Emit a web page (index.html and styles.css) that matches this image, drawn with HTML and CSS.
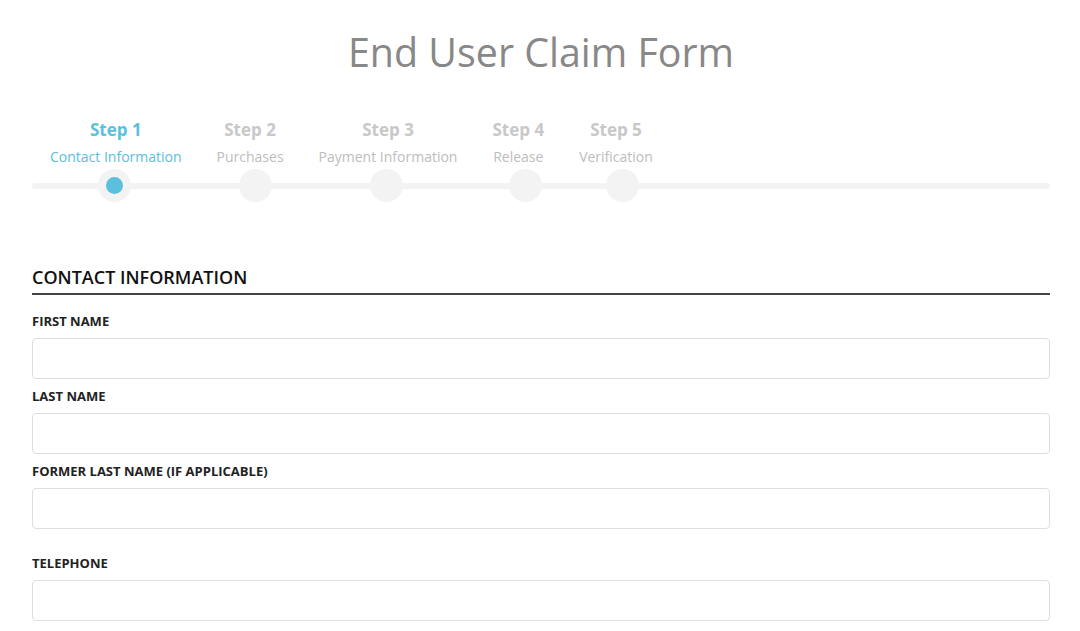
FILE: index.html
```html
<!DOCTYPE html>
<html lang="en">
<head>
  <meta charset="UTF-8" />
  <meta name="viewport" content="width=device-width, initial-scale=1.0" />
  <title>End User Claim Form</title>
  <link rel="stylesheet" href="styles.css">
</head>
<body>
  <div class="page">
    <h1 class="title">End User Claim Form</h1>

    <div class="wizard">
      <div class="steps">
        <div class="step active">
          <span class="step-num">Step 1</span>
          <span class="step-name">Contact Information</span>
        </div>
        <div class="step">
          <span class="step-num">Step 2</span>
          <span class="step-name">Purchases</span>
        </div>
        <div class="step">
          <span class="step-num">Step 3</span>
          <span class="step-name">Payment Information</span>
        </div>
        <div class="step">
          <span class="step-num">Step 4</span>
          <span class="step-name">Release</span>
        </div>
        <div class="step">
          <span class="step-num">Step 5</span>
          <span class="step-name">Verification</span>
        </div>
      </div>

      <div class="track">
        <span class="dot dot-1 current"></span>
        <span class="dot dot-2"></span>
        <span class="dot dot-3"></span>
        <span class="dot dot-4"></span>
        <span class="dot dot-5"></span>
      </div>
    </div>

    <form class="claim-form">
      <h2 class="section-title">CONTACT INFORMATION</h2>

      <div class="field">
        <label for="firstName">FIRST NAME</label>
        <input type="text" id="firstName" />
      </div>

      <div class="field">
        <label for="lastName">LAST NAME</label>
        <input type="text" id="lastName" />
      </div>

      <div class="field spaced">
        <label for="formerName">FORMER LAST NAME (IF APPLICABLE)</label>
        <input type="text" id="formerName" />
      </div>

      <div class="field">
        <label for="phone">TELEPHONE</label>
        <input type="tel" id="phone" />
      </div>
    </form>
  </div>
</body>
</html>
```

FILE: styles.css
```css
:root {
  --accent-color: #5bc0de;
  --muted: #c4c4c4;
  --track: #f3f3f3;
}

* {
  box-sizing: border-box;
}

body {
  margin: 0;
  font-family: 'Open Sans', 'Noto Sans', sans-serif;
  background-color: #fff;
  color: #222;
}

.page {
  padding: 0 30px 0 32px;
}

.title {
  margin: 0;
  padding-top: 28px;
  font-size: 39.4px;
  line-height: 48px;
  font-weight: 400;
  color: #888;
  text-align: center;
}

/* wizard steps */
.wizard {
  margin-top: 42px;
}

.steps {
  display: flex;
  gap: 35px;
  padding-left: 18px;
}

.step {
  display: flex;
  flex-direction: column;
  align-items: center;
  color: var(--muted);
}

.step-num {
  font-size: 17px;
  line-height: 24px;
  font-weight: 700;
  color: #c8c8c8;
}

.step-name {
  margin-top: 5px;
  font-size: 14px;
  line-height: 20px;
  color: #bdbdbd;
}

.step.active .step-num,
.step.active .step-name {
  color: var(--accent-color);
}

.track {
  position: relative;
  height: 6px;
  margin-top: 16px;
  background: var(--track);
  border-radius: 3px;
}

.dot {
  position: absolute;
  top: -14px;
  width: 33px;
  height: 33px;
  border-radius: 50%;
  background: var(--track);
}

.dot.current::after {
  content: '';
  position: absolute;
  top: 8px;
  left: 8px;
  width: 17px;
  height: 17px;
  border-radius: 50%;
  background: var(--accent-color);
}

.dot-1 { left: 66px; }
.dot-2 { left: 207px; }
.dot-3 { left: 338px; }
.dot-4 { left: 477px; }
.dot-5 { left: 574px; }

/* form */
.claim-form {
  margin-top: 76px;
}

.section-title {
  margin: 0 0 17px;
  padding-bottom: 4px;
  font-size: 18px;
  line-height: 24px;
  font-weight: 600;
  color: #111;
  border-bottom: 2px solid #444;
}

.field {
  margin-bottom: 8px;
}

.field.spaced {
  margin-bottom: 25px;
}

.field label {
  display: block;
  margin-bottom: 8px;
  font-size: 13px;
  line-height: 18px;
  font-weight: 700;
  color: #222;
}

.field input {
  display: block;
  width: 100%;
  height: 41px;
  padding: 6px 12px;
  font-family: inherit;
  font-size: 14px;
  border: 1px solid #dcdee2;
  border-radius: 4px;
  background: #fff;
}
```
